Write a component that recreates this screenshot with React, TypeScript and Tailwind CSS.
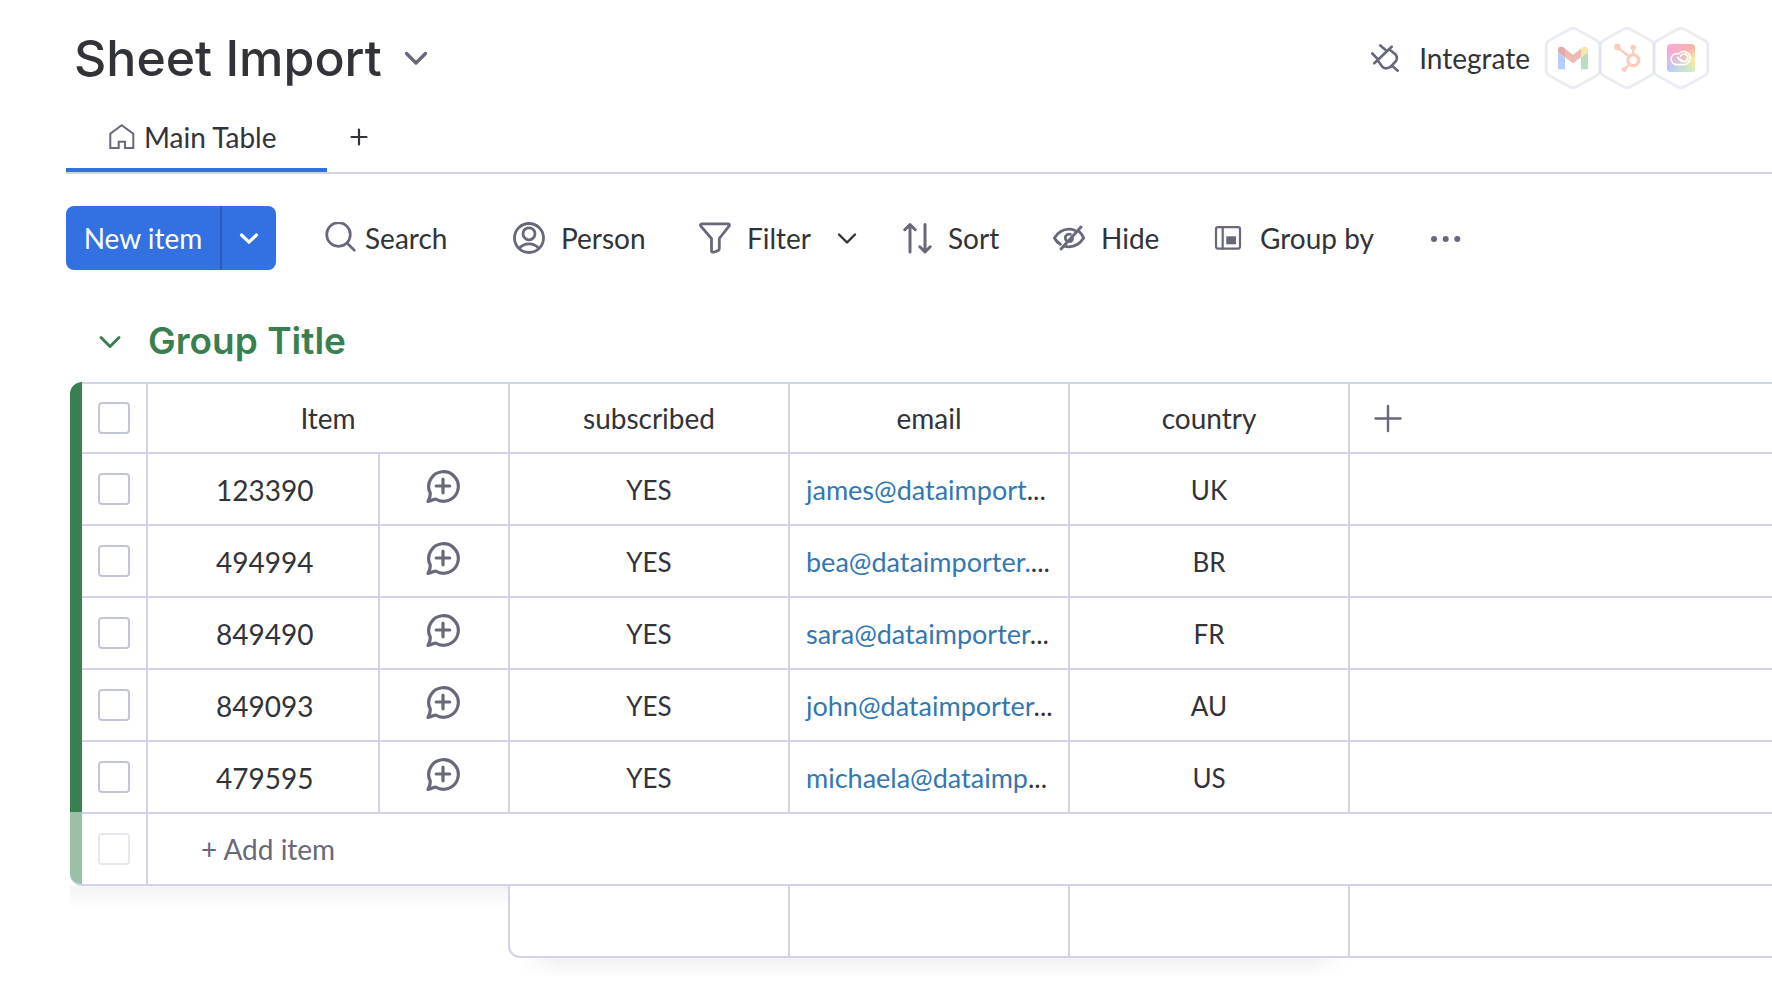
import React from 'react';

const rows = [
  { id: '123390', subscribed: 'YES', email: 'james@dataimport', country: 'UK' },
  { id: '494994', subscribed: 'YES', email: 'bea@dataimporter.', country: 'BR' },
  { id: '849490', subscribed: 'YES', email: 'sara@dataimporter', country: 'FR' },
  { id: '849093', subscribed: 'YES', email: 'john@dataimporter', country: 'AU' },
  { id: '479595', subscribed: 'YES', email: 'michaela@dataimp', country: 'US' },
];

type IconProps = { children: React.ReactNode; size?: number; className?: string; width?: number };

function Icon({ children, size = 32, className = 'text-[#676879]', width = 2.7 }: IconProps) {
  return (
    <svg
      aria-hidden="true"
      width={size}
      height={size}
      viewBox={`0 0 ${size} ${size}`}
      fill="none"
      stroke="currentColor"
      strokeWidth={width}
      strokeLinecap="round"
      strokeLinejoin="round"
      className={`shrink-0 ${className}`}
    >
      {children}
    </svg>
  );
}

function Hexagon({ children }: { children: React.ReactNode }) {
  return (
    <svg aria-hidden="true" width="58" height="66" viewBox="0 0 58 66" fill="none" className="-ml-1 shrink-0 first:ml-0">
      <path
        d="M25 4.5Q29 2.2 33 4.5L53 15.6Q55.8 17.2 55.8 20.2V45.8Q55.8 48.8 53 50.4L33 61.5Q29 63.8 25 61.5L5 50.4Q2.2 48.8 2.2 45.8V20.2Q2.2 17.2 5 15.6Z"
        stroke="#dcdfec"
        strokeOpacity="0.6"
        strokeWidth="2.8"
      />
      {children}
    </svg>
  );
}

function Integrations() {
  return (
    <span className="flex">
      <Hexagon>
        <path d="M14 27V42.8Q14 44.3 15.5 44.3H21V32.3Z" fill="#b8cdf9" />
        <path d="M44 27V42.8Q44 44.3 42.5 44.3H37V32.3Z" fill="#bbdcc0" />
        <path d="M14 27V24.8Q14 21.7 17 21.7Q18.6 21.7 19.8 22.6L21 23.6V32.3Z" fill="#e3aaa8" />
        <path d="M44 27V24.8Q44 21.7 41 21.7Q39.4 21.7 38.2 22.6L37 23.6V32.3Z" fill="#fae5a8" />
        <path d="M21 23.5L29 30L37 23.5V32.3L29 38.3L21 32.3Z" fill="#f0b8b4" />
      </Hexagon>
      <Hexagon>
        <g stroke="#fbcbbd" fill="none">
          <circle cx="35.3" cy="35.3" r="5.4" strokeWidth="3.4" />
          <path d="M35.2 29V23M30.8 31L20 23M31 39.8L26.5 44" strokeWidth="2.2" />
        </g>
        <g fill="#fbcbbd">
          <circle cx="35.2" cy="22.4" r="2.7" />
          <circle cx="19.4" cy="22" r="3.2" />
          <circle cx="26.2" cy="44.5" r="2.4" />
        </g>
      </Hexagon>
      <Hexagon>
        <defs>
          <linearGradient id="cc-top" x1="0" x2="1" y1="0" y2="0">
            <stop offset="0" stopColor="#f8a8da" />
            <stop offset="1" stopColor="#f8b4a2" />
          </linearGradient>
          <linearGradient id="cc-bottom" x1="0" x2="1" y1="0" y2="0">
            <stop offset="0" stopColor="#aecbff" />
            <stop offset="0.5" stopColor="#bfe4e0" />
            <stop offset="1" stopColor="#c4f3b4" />
          </linearGradient>
          <linearGradient id="cc-fade" x1="0" x2="0" y1="0" y2="1">
            <stop offset="0.3" stopColor="#000" />
            <stop offset="0.95" stopColor="#fff" />
          </linearGradient>
          <radialGradient id="cc-side" cx="1" cy="0.58" r="0.45">
            <stop offset="0" stopColor="#faf0a4" />
            <stop offset="1" stopColor="#faf0a4" stopOpacity="0" />
          </radialGradient>
          <mask id="cc-mask">
            <rect x="15" y="19" width="28" height="28" fill="url(#cc-fade)" />
          </mask>
        </defs>
        <rect x="15" y="19" width="28" height="28" rx="4" fill="url(#cc-top)" />
        <rect x="15" y="19" width="28" height="28" rx="4" fill="url(#cc-bottom)" mask="url(#cc-mask)" />
        <rect x="15" y="19" width="28" height="28" rx="4" fill="url(#cc-side)" />
        <g stroke="#fff" strokeWidth="1.6" strokeLinecap="round">
          <path d="M24.6 39.6A5.4 5.4 0 0 1 24.6 28.6Q25.6 28.6 26.4 28.9A6.6 6.6 0 1 1 32.2 39.6Z" />
          <path d="M29.6 36.6L25.6 32.4" />
          <path d="M28.4 31.4A3.8 3.8 0 1 1 32.2 36.6Q31 36.6 30 35.6L28.6 34.2" />
        </g>
      </Hexagon>
    </span>
  );
}

function Checkbox({ label, faded = false }: { label: string; faded?: boolean }) {
  return (
    <input
      type="checkbox"
      aria-label={label}
      disabled={faded}
      className={`block size-8 mx-auto appearance-none rounded border-2 bg-white checked:bg-[#3371e2] ${faded ? 'border-[#e7e7ef]' : 'border-[#c3c6d4]'}`}
    />
  );
}

function ToolButton({ label, className, children }: { label: string; className: string; children: React.ReactNode }) {
  return (
    <button type="button" className={`flex shrink-0 items-center whitespace-nowrap ${className}`}>
      {children}
      <span>{label}</span>
    </button>
  );
}

const line = 'border-[#d0d4e4]';

export default function App() {
  return (
    <div className="min-h-screen overflow-x-hidden bg-white font-['Lato',sans-serif] text-[28px] leading-9 text-[#323338]">
      <header className="flex h-[106px] items-center justify-between pt-2.5 pr-[62px] pl-[74px]">
        <div className="flex items-center gap-5">
          <h1 className="font-['Inter',sans-serif] text-[50px] leading-[60px] font-medium">Sheet Import</h1>
          <button type="button" aria-label="Board menu">
            <Icon size={28} width={3.4}>
              <path d="M4.5 9.5L14 19L23.5 9.5" />
            </Icon>
          </button>
        </div>
        <button type="button" className="flex items-center gap-3">
          <Icon size={28} width={2.6} className="mr-2 text-[#676879]">
            <path d="M9.3 1.5L15.8 7M20.7 2.7L3.3 19.3M1.3 9.5L7 15.3M7 16.8L11.5 23Q15.5 26.3 20.7 21.7L25 17Q27 13.6 24.5 10.4L18 5M21 21.7L26.7 26.7" />
          </Icon>
          <span className="mr-0.5">Integrate</span>
          <Integrations />
        </button>
      </header>

      <nav className={`ml-[66px] flex h-[68px] border-b-2 ${line}`}>
        <a href="#main-table" className="flex w-[261px] items-center gap-2 border-b-4 border-[#3371e2] pl-[42px]">
          <Icon size={28} width={2}>
            <path strokeLinejoin="miter" d="M2.3 25V10.8L13.7 2.3L25.3 10.8V25H17V18.7H10.7V25Z" />
          </Icon>
          Main Table
        </a>
        <button type="button" aria-label="Add view" className="ml-[18px] pb-1">
          <Icon size={28} className="text-[#323338]" width={2.2}>
            <path d="M14 6.5V21.5M6.5 14H21.5" />
          </Icon>
        </button>
      </nav>

      <div className="flex items-center pt-8 pl-[66px]">
        <div className="mr-[49px] flex h-16 shrink-0 overflow-hidden rounded-lg bg-[#3371e2] text-white">
          <button type="button" className="w-[154px] whitespace-nowrap">New item</button>
          <button type="button" aria-label="More item options" className="flex w-14 items-center justify-center border-l-2 border-[#285bb8]">
            <Icon size={24} className="text-white" width={3.2}>
              <path d="M4.5 9L12 16.2L19.5 9" />
            </Icon>
          </button>
        </div>
        <ToolButton label="Search" className="w-[188px] gap-2">
          <Icon>
            <circle cx="13.5" cy="12.5" r="11.8" />
            <path d="M22 21L29.3 28.3" />
          </Icon>
        </ToolButton>
        <ToolButton label="Person" className="w-[186px] gap-4">
          <Icon width={2.8}>
            <circle cx="16" cy="16" r="14.5" />
            <circle cx="16" cy="11.8" r="6" />
            <path d="M6.5 26Q10 21.8 16 21.8T25.5 26" />
          </Icon>
        </ToolButton>
        <div className="flex w-[203px] shrink-0 items-center">
          <ToolButton label="Filter" className="gap-4">
            <Icon width={2.8}>
              <path d="M3 1.8H29Q31.2 2.2 30 4.2L20.3 16.5V26.5Q20.3 28 19 28.6L14.6 30.2Q12.5 30.4 12.5 28.5V16.5L1.8 4.2Q0.8 2.2 3 1.8Z" />
            </Icon>
          </ToolButton>
          <button type="button" aria-label="Filter options" className="ml-6">
            <Icon size={24} className="text-[#323338]" width={2.4}>
              <path d="M4 8.5L12 16.5L20 8.5" />
            </Icon>
          </button>
        </div>
        <ToolButton label="Sort" className="w-[151px] gap-3.5">
          <Icon width={3}>
            <path d="M8 30V2.5M2.8 7.7L8 2.5L13.2 7.7M23 2.5V30M17.8 24.8L23 30L28.2 24.8" />
          </Icon>
        </ToolButton>
        <ToolButton label="Hide" className="w-[159px] gap-4">
          <Icon width={2.8}>
            <path d="M26.4 9.8Q29.5 12.6 30.6 16Q25.2 24.6 16 24.8Q13.6 24.8 11.6 24.2M21.6 8.2Q19 7.2 16 7.2Q6.8 7.4 1.4 16Q3.4 20 7.4 22.3M8 27L28 5M13.2 18.6Q11.6 16 12.8 14Q14.2 11.6 17.4 12.3M17.2 19.6Q19.4 18.8 19.6 16.4" />
          </Icon>
        </ToolButton>
        <ToolButton label="Group by" className="w-[218px] gap-4">
          <Icon width={2.2}>
            <rect x="4" y="5.2" width="24" height="21.4" rx="2" />
            <path d="M10.7 5.2V26.6" />
            <rect x="14.3" y="14.3" width="9.7" height="8" fill="currentColor" stroke="none" />
          </Icon>
        </ToolButton>
        <button type="button" aria-label="More actions">
          <Icon>
            <g fill="currentColor" stroke="none">
              <circle cx="4" cy="17" r="3" />
              <circle cx="15.7" cy="17" r="3" />
              <circle cx="27.3" cy="17" r="3" />
            </g>
          </Icon>
        </button>
      </div>

      <div className="mt-10 mb-[10px] flex h-[62px] items-center gap-6 pl-24 text-[#3a7f50]">
        <button type="button" aria-label="Collapse group">
          <Icon size={28} className="text-[#3a7f50]" width={3}>
            <path d="M5 10.5L14 19.5L23 10.5" />
          </Icon>
        </button>
        <h2 className="font-['Inter',sans-serif] text-[37px] leading-[44px] font-semibold">Group Title</h2>
      </div>

      <div className="pl-[70px]">
        <table className="w-full table-fixed border-separate border-spacing-0 text-center">
          <colgroup>
            <col className="w-3" />
            <col className="w-16" />
            <col className="w-[232px]" />
            <col className="w-[130px]" />
            <col className="w-[280px]" />
            <col className="w-[280px]" />
            <col className="w-[280px]" />
            <col />
          </colgroup>
          <thead>
            <tr className="h-[70px]">
              <td className="rounded-tl-xl bg-[#3a7f50] p-0" />
              <td className={`border-t-2 p-0 ${line}`}>
                <Checkbox label="Select all items" />
              </td>
              <th colSpan={2} className={`border-t-2 border-l-2 p-0 font-normal ${line}`}>Item</th>
              <th className={`border-t-2 border-l-2 p-0 font-normal ${line}`}>subscribed</th>
              <th className={`border-t-2 border-l-2 p-0 font-normal ${line}`}>email</th>
              <th className={`border-t-2 border-l-2 p-0 font-normal ${line}`}>country</th>
              <td className={`border-t-2 border-l-2 p-0 pl-6 ${line}`}>
                <button type="button" aria-label="Add column" className="block">
                  <Icon width={2.4}>
                    <path d="M14 4V29M1.5 16.5H26.5" />
                  </Icon>
                </button>
              </td>
            </tr>
          </thead>
          <tbody>
            {rows.map((row) => (
              <tr key={row.id} className="h-[72px]">
                <td className="bg-[#3a7f50] p-0" />
                <td className={`border-t-2 p-0 ${line}`}>
                  <Checkbox label={`Select ${row.id}`} />
                </td>
                <td className={`border-t-2 border-l-2 p-0 pt-0.5 pl-[68px] text-left ${line}`}>{row.id}</td>
                <td className={`border-t-2 border-l-2 p-0 pr-0.5 pb-1.5 ${line}`}>
                  <button type="button" aria-label={`Comment on ${row.id}`} className="mx-auto block">
                    <Icon size={36} width={3.2}>
                      <path d="M5.2 25A14.8 14.8 0 1 1 10.6 31L3 33.4Q5.6 28.6 5.2 25ZM18 11.2V24.8M11.2 18H24.8" />
                    </Icon>
                  </button>
                </td>
                <td className={`border-t-2 border-l-2 p-0 pt-0.5 text-[26px] ${line}`}>{row.subscribed}</td>
                <td className={`border-t-2 border-l-2 p-0 pt-0.5 pl-4 text-left text-[27px] whitespace-nowrap ${line}`}>
                  <a href="#email" className="text-[#3277b3]">{row.email}</a>...
                </td>
                <td className={`border-t-2 border-l-2 p-0 pt-0.5 text-[26px] ${line}`}>{row.country}</td>
                <td className={`border-t-2 border-l-2 p-0 ${line}`} />
              </tr>
            ))}
            <tr className="h-[74px]">
              <td className={`rounded-bl-xl border-b-2 bg-[#9bbfa7] p-0 ${line}`} />
              <td className={`border-y-2 p-0 ${line}`}>
                <Checkbox label="Select new item" faded />
              </td>
              <td colSpan={6} className={`border-y-2 border-l-2 p-0 pl-[53px] text-left text-[#676879] ${line}`}>
                <button type="button">+ Add item</button>
              </td>
            </tr>
          </tbody>
          <tfoot>
            <tr className="h-[72px]">
              <td colSpan={4} className="bg-[linear-gradient(to_bottom,#f3f3f3,#ffffff_24px)] p-0" />
              <td className={`rounded-bl-xl border-b-2 border-l-2 p-0 ${line}`} />
              <td className={`border-b-2 border-l-2 p-0 ${line}`} />
              <td className={`border-b-2 border-l-2 p-0 ${line}`} />
              <td className={`border-b-2 border-l-2 p-0 ${line}`} />
            </tr>
          </tfoot>
        </table>
        <div className="ml-[448px] h-5 w-[830px] bg-[linear-gradient(to_bottom,#f1f1f1,#ffffff)] [mask-image:linear-gradient(to_right,transparent,black_40px,black_790px,transparent)]" />
      </div>
    </div>
  );
}
